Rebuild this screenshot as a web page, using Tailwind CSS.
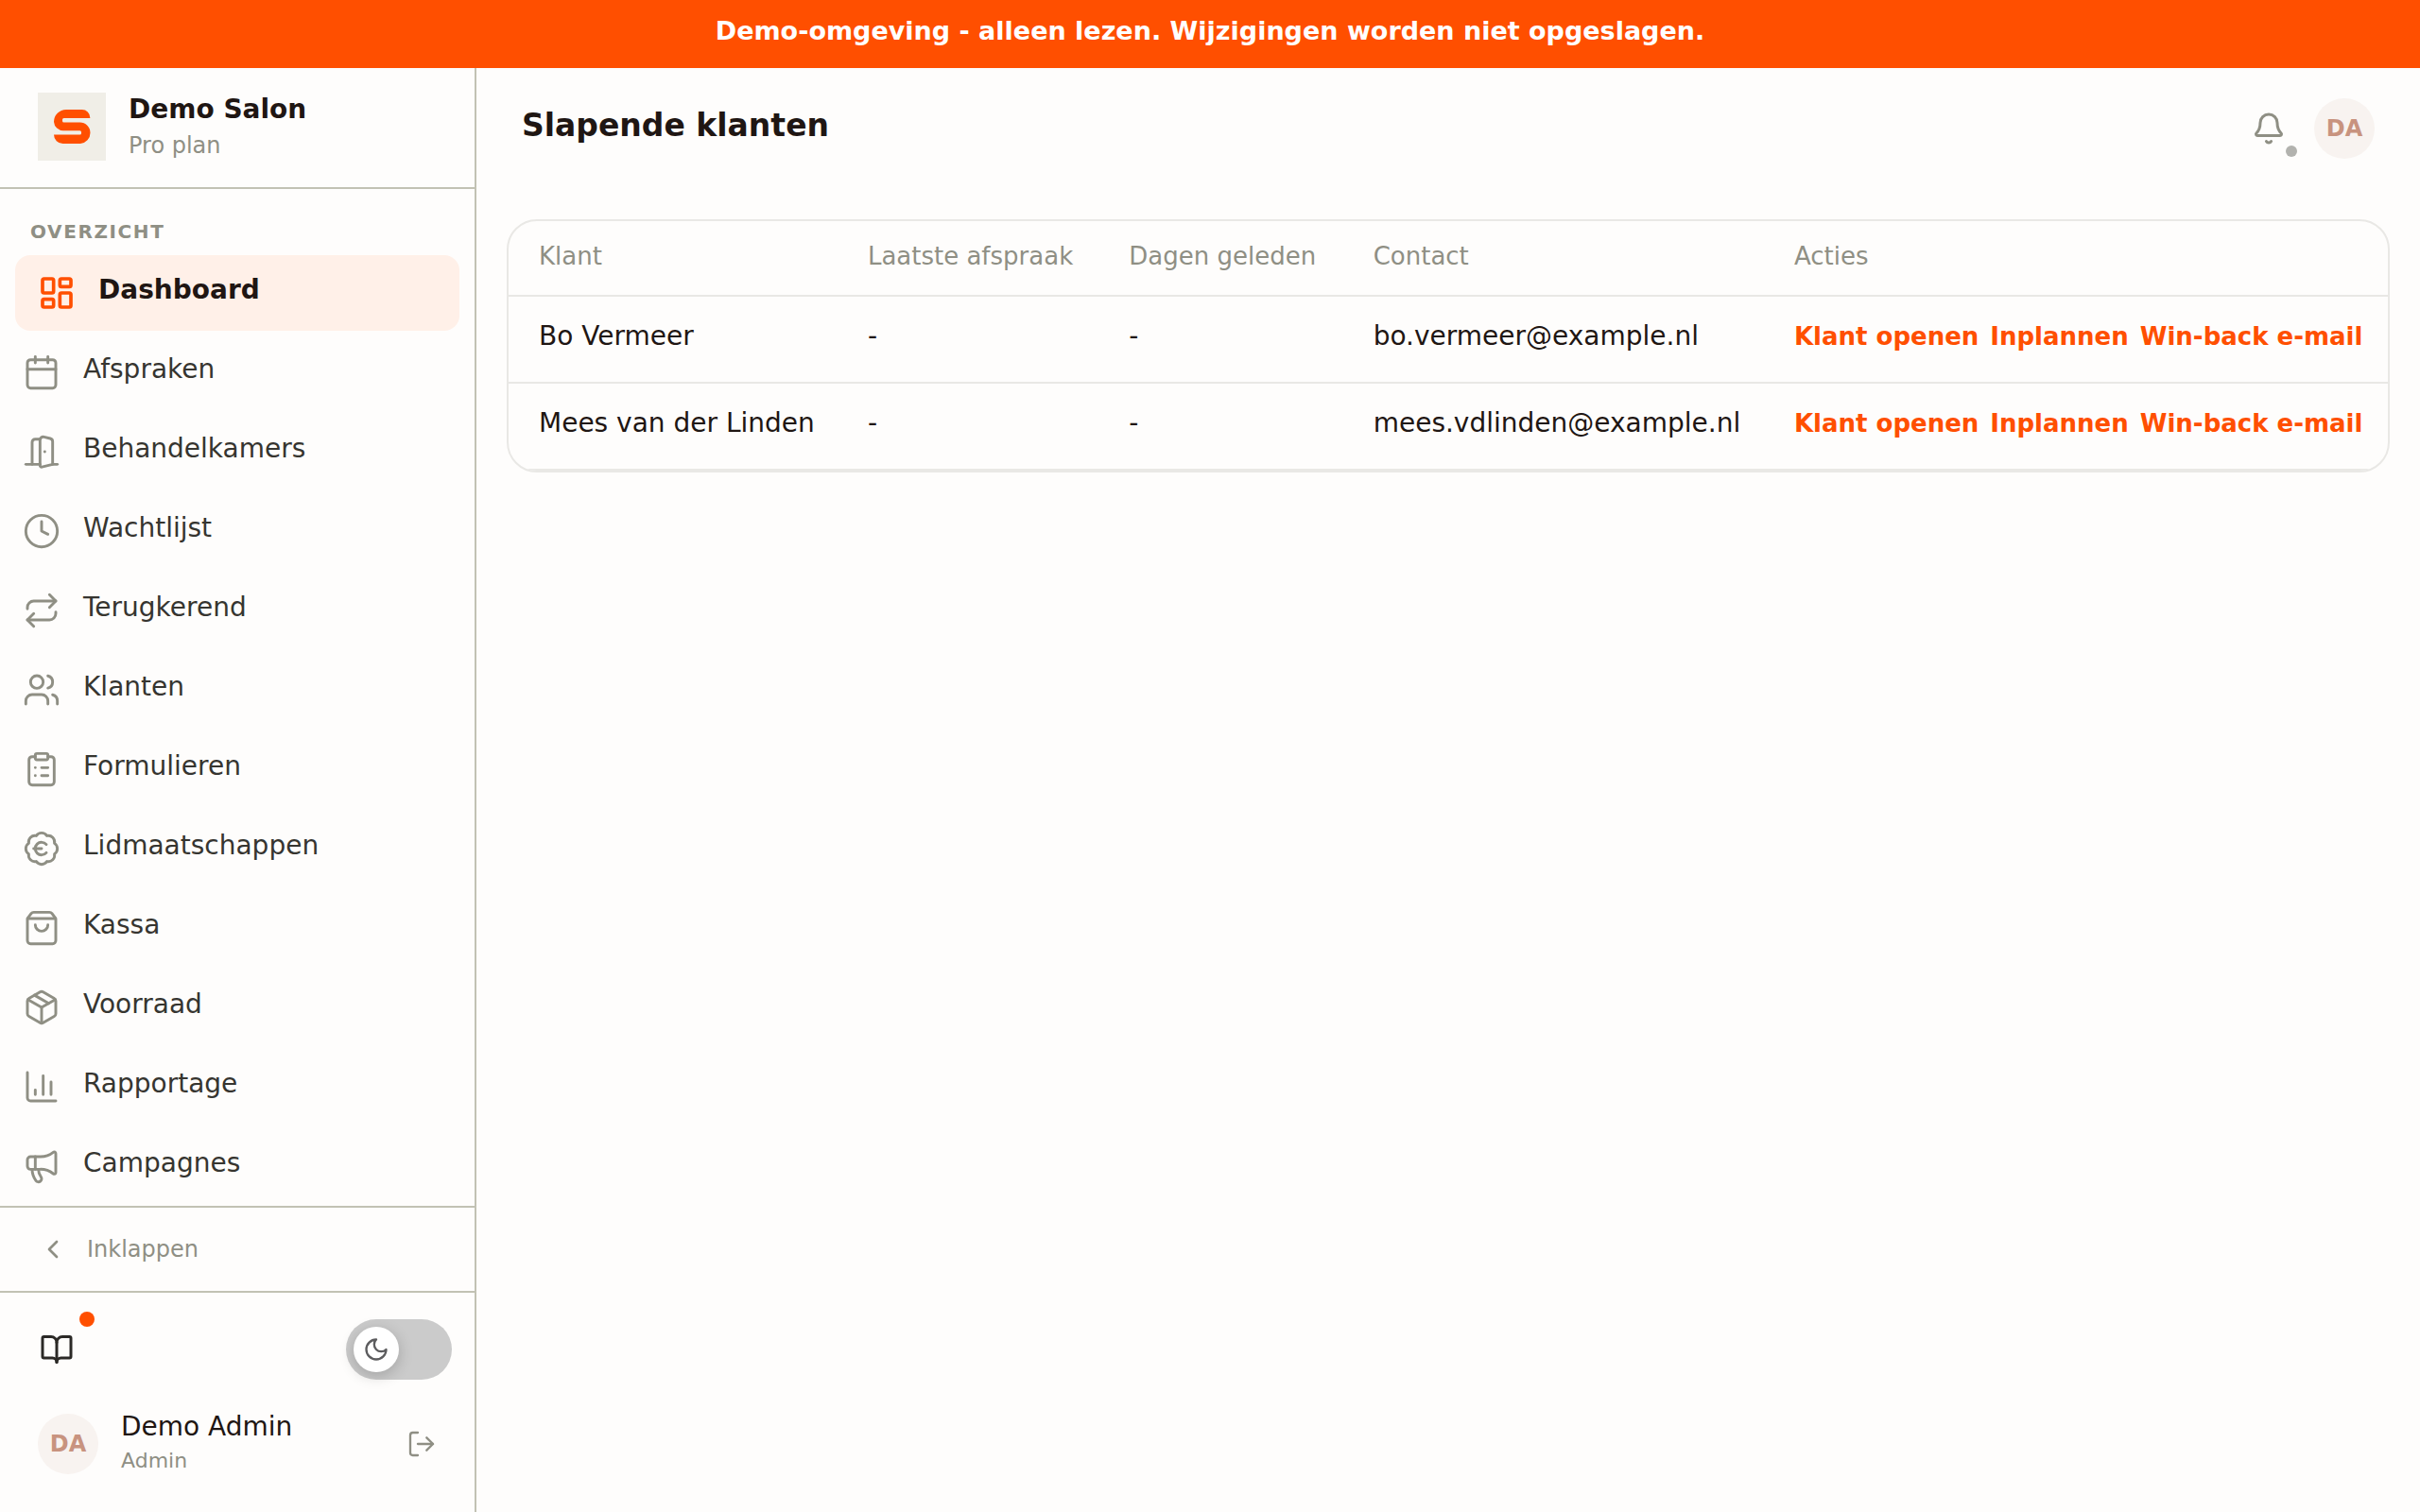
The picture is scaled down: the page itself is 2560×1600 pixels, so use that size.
<!DOCTYPE html>
<html lang="nl">
<head>
<meta charset="utf-8">
<meta name="viewport" content="width=device-width, initial-scale=1">
<title>Slapende klanten</title>
<script src="https://cdn.jsdelivr.net/npm/@tailwindcss/browser@4"></script>
</head>
<body class="flex h-screen flex-col bg-[#fefdfc] font-['DejaVu_Sans',sans-serif] text-[28px] leading-[40px] text-[#1f1613]">

<div role="status" class="flex h-[72px] shrink-0 items-center justify-center bg-[#ff4f00] pb-1.5 text-[27px] font-bold text-white">Demo-omgeving - alleen lezen. Wijzigingen worden niet opgeslagen.</div>

<div class="flex min-h-0 flex-1">
  <aside class="flex w-[504px] shrink-0 flex-col border-r-2 border-[#c2c2b4]">
    <div class="flex shrink-0 items-center gap-6 border-b-2 border-[#c2c2b4] px-10 pt-6 pb-[26px]">
      <svg class="size-[72px] shrink-0" viewBox="0 0 72 72" aria-hidden="true"><rect width="72" height="72" fill="#f0eee7"/><path fill="#ff4f00" d="M55.300 27V26.500A8.500 8.500 0 0 0 46.800 18H30A13 13 0 0 0 17 31A10 10 0 0 0 27 40.300H44.500A1.500 1.500 0 0 1 46 41.800V43A1.500 1.500 0 0 1 44.500 44.500H17A9.500 9.500 0 0 0 26.500 54H45A11.500 11.500 0 0 0 55.500 42.500A11 11 0 0 0 44.500 31.500H27.500A1.500 1.500 0 0 1 26 30V28.500A1.500 1.500 0 0 1 27.500 27Z"/></svg>
      <div>
        <p class="font-bold">Demo Salon</p>
        <p class="text-2xl leading-9 text-[#8f8f84]">Pro plan</p>
      </div>
    </div>

    <nav aria-label="Hoofdmenu" class="min-h-0 flex-1 overflow-hidden px-4 text-[#363530]">
      <h2 class="px-4 pt-[30px] pb-2.5 text-xl leading-[30px] font-bold tracking-[0.08em] text-[#8f8f84]">OVERZICHT</h2>
      <ul class="flex flex-col gap-1">
        <li><a href="#" aria-current="page" class="flex h-20 items-center gap-6 rounded-2xl bg-[#fff0e8] px-6 font-bold text-[#1f1613]">
          <svg class="size-10 shrink-0 text-[#ff4f00]" viewBox="0 0 24 24" fill="none" stroke="currentColor" stroke-width="2.200" stroke-linecap="round" stroke-linejoin="round"><rect width="7" height="9" x="3" y="3" rx="1"/><rect width="7" height="5" x="14" y="3" rx="1"/><rect width="7" height="9" x="14" y="12" rx="1"/><rect width="7" height="5" x="3" y="16" rx="1"/></svg>
          <span class="pb-1.5">Dashboard</span></a></li>
        <li><a href="#" class="flex h-20 items-center gap-6 px-2">
          <svg class="size-10 shrink-0 text-[#8f8f84]" viewBox="0 0 24 24" fill="none" stroke="currentColor" stroke-width="1.750" stroke-linecap="round" stroke-linejoin="round"><path d="M8 2v4M16 2v4M3 10h18"/><rect width="18" height="18" x="3" y="4" rx="2"/></svg>
          <span class="pb-1.5">Afspraken</span></a></li>
        <li><a href="#" class="flex h-20 items-center gap-6 px-2">
          <svg class="size-10 shrink-0 text-[#8f8f84]" viewBox="0 0 24 24" fill="none" stroke="currentColor" stroke-width="1.750" stroke-linecap="round" stroke-linejoin="round"><path d="M11 20H2"/><path d="M11 4.562v16.157a1 1 0 0 0 1.242.97L19 20V5.562a2 2 0 0 0-1.515-1.940l-4-1A2 2 0 0 0 11 4.561z"/><path d="M11 4H8a2 2 0 0 0-2 2v14"/><path d="M14 12h.01"/><path d="M22 20h-3"/></svg>
          <span class="pb-1.5">Behandelkamers</span></a></li>
        <li><a href="#" class="flex h-20 items-center gap-6 px-2">
          <svg class="size-10 shrink-0 text-[#8f8f84]" viewBox="0 0 24 24" fill="none" stroke="currentColor" stroke-width="1.750" stroke-linecap="round" stroke-linejoin="round"><circle cx="12" cy="12" r="10"/><path d="M12 6v6l4 2"/></svg>
          <span class="pb-1.5">Wachtlijst</span></a></li>
        <li><a href="#" class="flex h-20 items-center gap-6 px-2">
          <svg class="size-10 shrink-0 text-[#8f8f84]" viewBox="0 0 24 24" fill="none" stroke="currentColor" stroke-width="1.750" stroke-linecap="round" stroke-linejoin="round"><path d="m17 2 4 4-4 4"/><path d="M3 11v-1a4 4 0 0 1 4-4h14"/><path d="m7 22-4-4 4-4"/><path d="M21 13v1a4 4 0 0 1-4 4H3"/></svg>
          <span class="pb-1.5">Terugkerend</span></a></li>
        <li><a href="#" class="flex h-20 items-center gap-6 px-2">
          <svg class="size-10 shrink-0 text-[#8f8f84]" viewBox="0 0 24 24" fill="none" stroke="currentColor" stroke-width="1.750" stroke-linecap="round" stroke-linejoin="round"><path d="M16 21v-2a4 4 0 0 0-4-4H6a4 4 0 0 0-4 4v2"/><circle cx="9" cy="7" r="4"/><path d="M16 3.128a4 4 0 0 1 0 7.744"/><path d="M22 21v-2a4 4 0 0 0-3-3.870"/></svg>
          <span class="pb-1.5">Klanten</span></a></li>
        <li><a href="#" class="flex h-20 items-center gap-6 px-2">
          <svg class="size-10 shrink-0 text-[#8f8f84]" viewBox="0 0 24 24" fill="none" stroke="currentColor" stroke-width="1.750" stroke-linecap="round" stroke-linejoin="round"><rect width="8" height="4" x="8" y="2" rx="1"/><path d="M16 4h2a2 2 0 0 1 2 2v14a2 2 0 0 1-2 2H6a2 2 0 0 1-2-2V6a2 2 0 0 1 2-2h2"/><path d="M12 11h4M12 16h4M8 11h.01M8 16h.01"/></svg>
          <span class="pb-1.5">Formulieren</span></a></li>
        <li><a href="#" class="flex h-20 items-center gap-6 px-2">
          <svg class="size-10 shrink-0 text-[#8f8f84]" viewBox="0 0 24 24" fill="none" stroke="currentColor" stroke-width="1.750" stroke-linecap="round" stroke-linejoin="round"><path d="M3.850 8.620a4 4 0 0 1 4.780-4.770 4 4 0 0 1 6.740 0 4 4 0 0 1 4.780 4.780 4 4 0 0 1 0 6.740 4 4 0 0 1-4.770 4.780 4 4 0 0 1-6.750 0 4 4 0 0 1-4.780-4.770 4 4 0 0 1 0-6.760Z"/><path d="M7 12h5"/><path d="M15 9.400a4 4 0 1 0 0 5.200"/></svg>
          <span class="pb-1.5">Lidmaatschappen</span></a></li>
        <li><a href="#" class="flex h-20 items-center gap-6 px-2">
          <svg class="size-10 shrink-0 text-[#8f8f84]" viewBox="0 0 24 24" fill="none" stroke="currentColor" stroke-width="1.750" stroke-linecap="round" stroke-linejoin="round"><path d="M16 10a4 4 0 0 1-8 0"/><path d="M3.103 6.034h17.794"/><path d="M3.400 5.467a2 2 0 0 0-.4 1.200V20a2 2 0 0 0 2 2h14a2 2 0 0 0 2-2V6.667a2 2 0 0 0-.4-1.200l-2-2.667A2 2 0 0 0 17 2H7a2 2 0 0 0-1.600.8z"/></svg>
          <span class="pb-1.5">Kassa</span></a></li>
        <li><a href="#" class="flex h-20 items-center gap-6 px-2">
          <svg class="size-10 shrink-0 text-[#8f8f84]" viewBox="0 0 24 24" fill="none" stroke="currentColor" stroke-width="1.750" stroke-linecap="round" stroke-linejoin="round"><path d="M11 21.730a2 2 0 0 0 2 0l7-4A2 2 0 0 0 21 16V8a2 2 0 0 0-1-1.730l-7-4a2 2 0 0 0-2 0l-7 4A2 2 0 0 0 3 8v8a2 2 0 0 0 1 1.730z"/><path d="M12 22V12"/><path d="M3.290 7 12 12l8.710-5"/><path d="m7.500 4.270 9 5.150"/></svg>
          <span class="pb-1.5">Voorraad</span></a></li>
        <li><a href="#" class="flex h-20 items-center gap-6 px-2">
          <svg class="size-10 shrink-0 text-[#8f8f84]" viewBox="0 0 24 24" fill="none" stroke="currentColor" stroke-width="1.750" stroke-linecap="round" stroke-linejoin="round"><path d="M3 3v16a2 2 0 0 0 2 2h16"/><path d="M18 17V9M13 17V5M8 17v-3"/></svg>
          <span class="pb-1.5">Rapportage</span></a></li>
        <li><a href="#" class="flex h-20 items-center gap-6 px-2">
          <svg class="size-10 shrink-0 text-[#8f8f84]" viewBox="0 0 24 24" fill="none" stroke="currentColor" stroke-width="1.750" stroke-linecap="round" stroke-linejoin="round"><path d="M11 6a13 13 0 0 0 8.400-2.800A1 1 0 0 1 21 4v12a1 1 0 0 1-1.600.8A13 13 0 0 0 11 14H5a2 2 0 0 1-2-2V8a2 2 0 0 1 2-2z"/><path d="M6 14a12 12 0 0 0 2.400 7.200 2 2 0 0 0 3.200-2.400A8 8 0 0 1 10 14"/><path d="M8 6v8"/></svg>
          <span class="pb-1.5">Campagnes</span></a></li>
      </ul>
    </nav>

    <button type="button" class="flex h-[92px] shrink-0 items-center gap-5 border-y-2 border-[#c2c2b4] px-10 text-2xl text-[#8f8f84]">
      <svg class="size-8" viewBox="0 0 24 24" fill="none" stroke="currentColor" stroke-width="2" stroke-linecap="round" stroke-linejoin="round"><path d="m15 18-6-6 6-6"/></svg>
      Inklappen
    </button>

    <div class="flex shrink-0 flex-col gap-[30px] pt-7 pb-[34px]">
      <div class="flex h-16 items-center justify-between pr-6 pl-5">
        <button type="button" aria-label="Handleiding" class="relative flex size-20 items-center justify-center text-[#2b2926]">
          <svg class="size-9" viewBox="0 0 24 24" fill="none" stroke="currentColor" stroke-width="2" stroke-linecap="round" stroke-linejoin="round"><path d="M12 7v14"/><path d="M3 18a1 1 0 0 1-1-1V4a1 1 0 0 1 1-1h5a4 4 0 0 1 4 4 4 4 0 0 1 4-4h5a1 1 0 0 1 1 1v13a1 1 0 0 1-1 1h-6a3 3 0 0 0-3 3 3 3 0 0 0-3-3z"/></svg>
          <span class="absolute top-0 right-0 size-4 rounded-full bg-[#ff4f00]"></span>
        </button>
        <button type="button" role="switch" aria-checked="false" aria-label="Donkere modus" class="flex h-16 w-28 items-center rounded-full bg-[#cbcbcb] px-2">
          <span class="flex size-12 items-center justify-center rounded-full bg-white text-[#5c5c5e] shadow-[0_4px_16px_rgba(0,0,0,0.2)]">
            <svg class="size-7" viewBox="0 0 24 24" fill="none" stroke="currentColor" stroke-width="2" stroke-linecap="round" stroke-linejoin="round"><path d="M12 3a6 6 0 0 0 9 9 9 9 0 1 1-9-9Z"/></svg>
          </span>
        </button>
      </div>
      <div class="flex items-center gap-6 px-10">
        <span class="flex size-16 shrink-0 items-center justify-center rounded-full bg-[#f8f3f0] text-2xl font-bold text-[#c8937f]">DA</span>
        <div class="flex-1 pb-1">
          <p>Demo Admin</p>
          <p class="text-[22px] leading-8 text-[#8f8f84]">Admin</p>
        </div>
        <button type="button" aria-label="Uitloggen" class="text-[#8f8f84]"><svg class="size-8" viewBox="0 0 24 24" fill="none" stroke="currentColor" stroke-width="1.750" stroke-linecap="round" stroke-linejoin="round"><path d="m16 17 5-5-5-5"/><path d="M21 12H9"/><path d="M9 21H5a2 2 0 0 1-2-2V5a2 2 0 0 1 2-2h4"/></svg></button>
      </div>
    </div>
  </aside>

  <main class="min-w-0 flex-1">
    <header class="flex h-32 items-center justify-between px-12">
      <h1 class="pb-1.5 text-[33px] font-bold">Slapende klanten</h1>
      <div class="flex items-center gap-[18px]">
        <button type="button" aria-label="Meldingen" class="relative flex size-[60px] items-center justify-center text-[#8f8f84]">
          <svg class="size-9" viewBox="0 0 24 24" fill="none" stroke="currentColor" stroke-width="2" stroke-linecap="round" stroke-linejoin="round"><path d="M10.268 21a2 2 0 0 0 3.464 0"/><path d="M3.262 15.326A1 1 0 0 0 4 17h16a1 1 0 0 0 .74-1.673C19.410 13.956 18 12.499 18 8A6 6 0 0 0 6 8c0 4.499-1.411 5.956-2.738 7.326"/></svg>
          <span class="absolute right-0 bottom-0 size-3 rounded-full bg-[#b2b2ae]"></span>
        </button>
        <button type="button" aria-label="Account van Demo Admin" class="flex size-16 items-center justify-center rounded-full bg-[#f8f3f0] text-2xl font-bold text-[#c8937f]">DA</button>
      </div>
    </header>

    <section class="p-8" aria-label="Slapende klanten">
      <div class="overflow-hidden rounded-[32px] border-2 border-[#e9e8e5]">
        <table class="w-full table-fixed text-left whitespace-nowrap">
          <colgroup><col class="w-[17.500%]"><col class="w-[13.900%]"><col class="w-[13%]"><col class="w-[22.400%]"><col></colgroup>
          <thead>
            <tr class="h-[79px] border-b-2 border-[#e9e8e5] text-[26px] text-[#8f8f84]">
              <th scope="col" class="px-8 pb-1 font-normal">Klant</th>
              <th scope="col" class="px-8 pb-1 font-normal">Laatste afspraak</th>
              <th scope="col" class="px-8 pb-1 font-normal">Dagen geleden</th>
              <th scope="col" class="px-8 pb-1 font-normal">Contact</th>
              <th scope="col" class="px-8 pb-1 font-normal">Acties</th>
            </tr>
          </thead>
          <tbody>
            <tr class="h-[92px] border-b-2 border-[#e9e8e5]">
              <td class="px-8 pb-1.5">Bo Vermeer</td>
              <td class="px-8 pb-1.5">-</td>
              <td class="px-8 pb-1.5">-</td>
              <td class="px-8 pb-1.5">bo.vermeer@example.nl</td>
              <td class="px-8 pb-1.5"><div class="flex gap-3 text-[26px] font-bold text-[#ff4f00]"><a href="#">Klant openen</a><a href="#">Inplannen</a><a href="#">Win-back e-mail</a></div></td>
            </tr>
            <tr class="h-[92px] border-b-2 border-[#e9e8e5]">
              <td class="px-8 pb-1.5">Mees van der Linden</td>
              <td class="px-8 pb-1.5">-</td>
              <td class="px-8 pb-1.5">-</td>
              <td class="px-8 pb-1.5">mees.vdlinden@example.nl</td>
              <td class="px-8 pb-1.5"><div class="flex gap-3 text-[26px] font-bold text-[#ff4f00]"><a href="#">Klant openen</a><a href="#">Inplannen</a><a href="#">Win-back e-mail</a></div></td>
            </tr>
          </tbody>
        </table>
      </div>
    </section>
  </main>
</div>
</body>
</html>
